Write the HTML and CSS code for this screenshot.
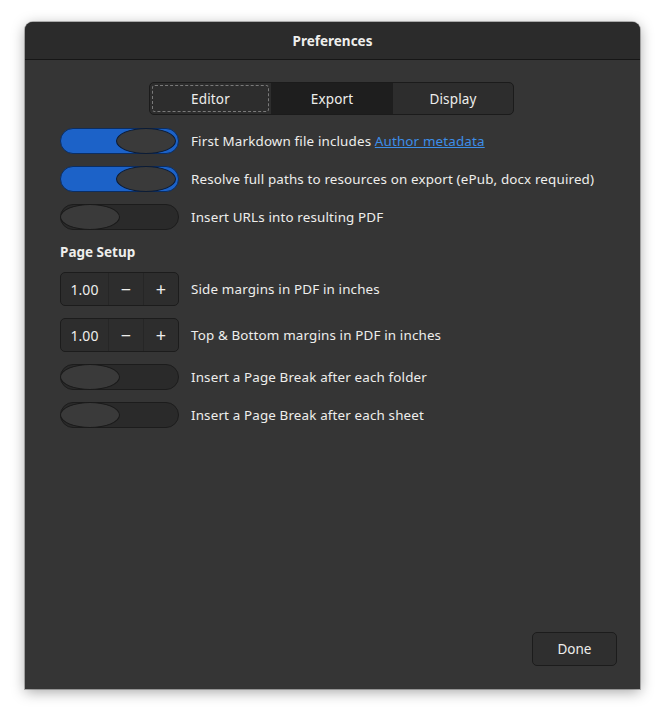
FILE: index.html
```html
<!DOCTYPE html>
<html>
<head>
<meta charset="utf-8">
<link rel="stylesheet" href="styles.css">
</head>
<body>
<div class="window">
  <header class="titlebar">Preferences</header>
  <main class="content">
    <nav class="tabs">
      <div class="tab focus"><span>Editor</span></div>
      <div class="tab active"><span>Export</span></div>
      <div class="tab"><span>Display</span></div>
    </nav>
    <div class="rows">
      <div class="row"><div class="switch on"><div class="knob"></div></div><span class="label">First Markdown file includes <a class="link">Author metadata</a></span></div>
      <div class="row"><div class="switch on"><div class="knob"></div></div><span class="label">Resolve full paths to resources on export (ePub, docx required)</span></div>
      <div class="row"><div class="switch"><div class="knob"></div></div><span class="label">Insert URLs into resulting PDF</span></div>
    </div>
    <h3 class="section">Page Setup</h3>
    <div class="spins">
      <div class="row spinrow"><div class="spin"><span class="val">1.00</span><span class="btn">−</span><span class="btn">+</span></div><span class="label">Side margins in PDF in inches</span></div>
      <div class="row spinrow"><div class="spin"><span class="val">1.00</span><span class="btn">−</span><span class="btn">+</span></div><span class="label">Top &amp; Bottom margins in PDF in inches</span></div>
    </div>
    <div class="rows rows2">
      <div class="row"><div class="switch"><div class="knob"></div></div><span class="label">Insert a Page Break after each folder</span></div>
      <div class="row"><div class="switch"><div class="knob"></div></div><span class="label">Insert a Page Break after each sheet</span></div>
    </div>
    <div class="spacer"></div>
    <div class="footer"><button class="done">Done</button></div>
  </main>
</div>
</body>
</html>
```
FILE: styles.css
```css
html, body { margin: 0; padding: 0; background: #ffffff; }
body {
  width: 665px; height: 717px;
  font-family: "Noto Sans", "DejaVu Sans", sans-serif;
  font-size: 13.4px;
  color: #eeeeec;
  padding: 22px 25px 0 25px;
  box-sizing: border-box;
}
.window {
  width: 615px; height: 667px;
  background: #353535;
  border-radius: 8px 8px 0 0;
  box-shadow: 0 3px 14px rgba(0,0,0,0.35), 0 0 0 1px rgba(0,0,0,0.25);
  display: flex; flex-direction: column;
  overflow: hidden;
}
.titlebar {
  height: 37px; flex: none;
  background: #2b2b2b;
  border-bottom: 1px solid #161616;
  display: flex; align-items: center; justify-content: center;
  font-weight: 700; font-size: 13.5px; color: #eeeeec;
}
.content {
  flex: 1;
  display: flex; flex-direction: column;
  padding: 22px 23px 23px 35px;
}
.tabs {
  align-self: center;
  margin-left: -14px;
  display: flex;
  height: 33px;
  border: 1px solid #1b1b1b;
  border-radius: 5px;
  background: #2d2d2d;
  overflow: hidden;
  box-sizing: border-box;
}
.tab {
  width: 121px;
  display: flex; align-items: center; justify-content: center;
  padding: 2px;
  box-sizing: border-box;
  font-size: 13.5px;
  letter-spacing: 0.15px;
}
.tab + .tab { border-left: 1px solid #1e1e1e; }
.tab span { flex: 1; height: 100%; display: flex; align-items: center; justify-content: center; }
.tab.focus span { outline: 1px dashed #7a7a7a; outline-offset: -1px; border-radius: 3px; }
.tab.active { background: #1e1e1e; }
.rows { display: flex; flex-direction: column; gap: 12px; margin-top: 13px; }
.row { display: flex; align-items: center; gap: 12px; }
.switch {
  width: 119px; height: 26px; flex: none;
  box-sizing: border-box;
  border-radius: 13px;
  border: 1px solid #1c1c1c;
  background: #2a2a2a;
  position: relative;
  display: flex; align-items: stretch;
}
.switch.on { background: #1c62c8; border-color: #0b2e63; justify-content: flex-end; }
.knob {
  width: 60px;
  border-radius: 50%;
  background: #3a3a3a;
  border: 1px solid #1a1a1a;
  margin: -1px;
  box-sizing: border-box;
}
.switch.on .knob { border-color: #0c1b33; margin-right: 2px; }
.label { font-size: 13.4px; white-space: nowrap; letter-spacing: 0.15px; }
.link { color: #3d8ee8; text-decoration: underline; }
.section { margin: 13px 0 11px 0; font-size: 13.5px; font-weight: 700; color: #eeeeec; line-height: 18px; }
.spins { display: flex; flex-direction: column; gap: 12px; }
.spin {
  width: 119px; height: 34px; flex: none;
  box-sizing: border-box;
  border: 1px solid #1c1c1c;
  border-radius: 5px;
  background: #2d2d2d;
  display: flex;
}
.spin .val { width: 47px; display: flex; align-items: center; justify-content: center; font-size: 14px; }
.spin .btn { flex: 1; display: flex; align-items: center; justify-content: center; border-left: 1px solid #262626; font-size: 18px; }
.rows2 { margin-top: 12px; }
.spacer { flex: 1; }
.footer { display: flex; justify-content: flex-end; }
.done {
  width: 85px; height: 34px;
  background: #2f2f2f;
  border: 1px solid #1c1c1c;
  border-radius: 5px;
  color: #eeeeec;
  font-family: inherit; font-size: 13.5px;
}
```
